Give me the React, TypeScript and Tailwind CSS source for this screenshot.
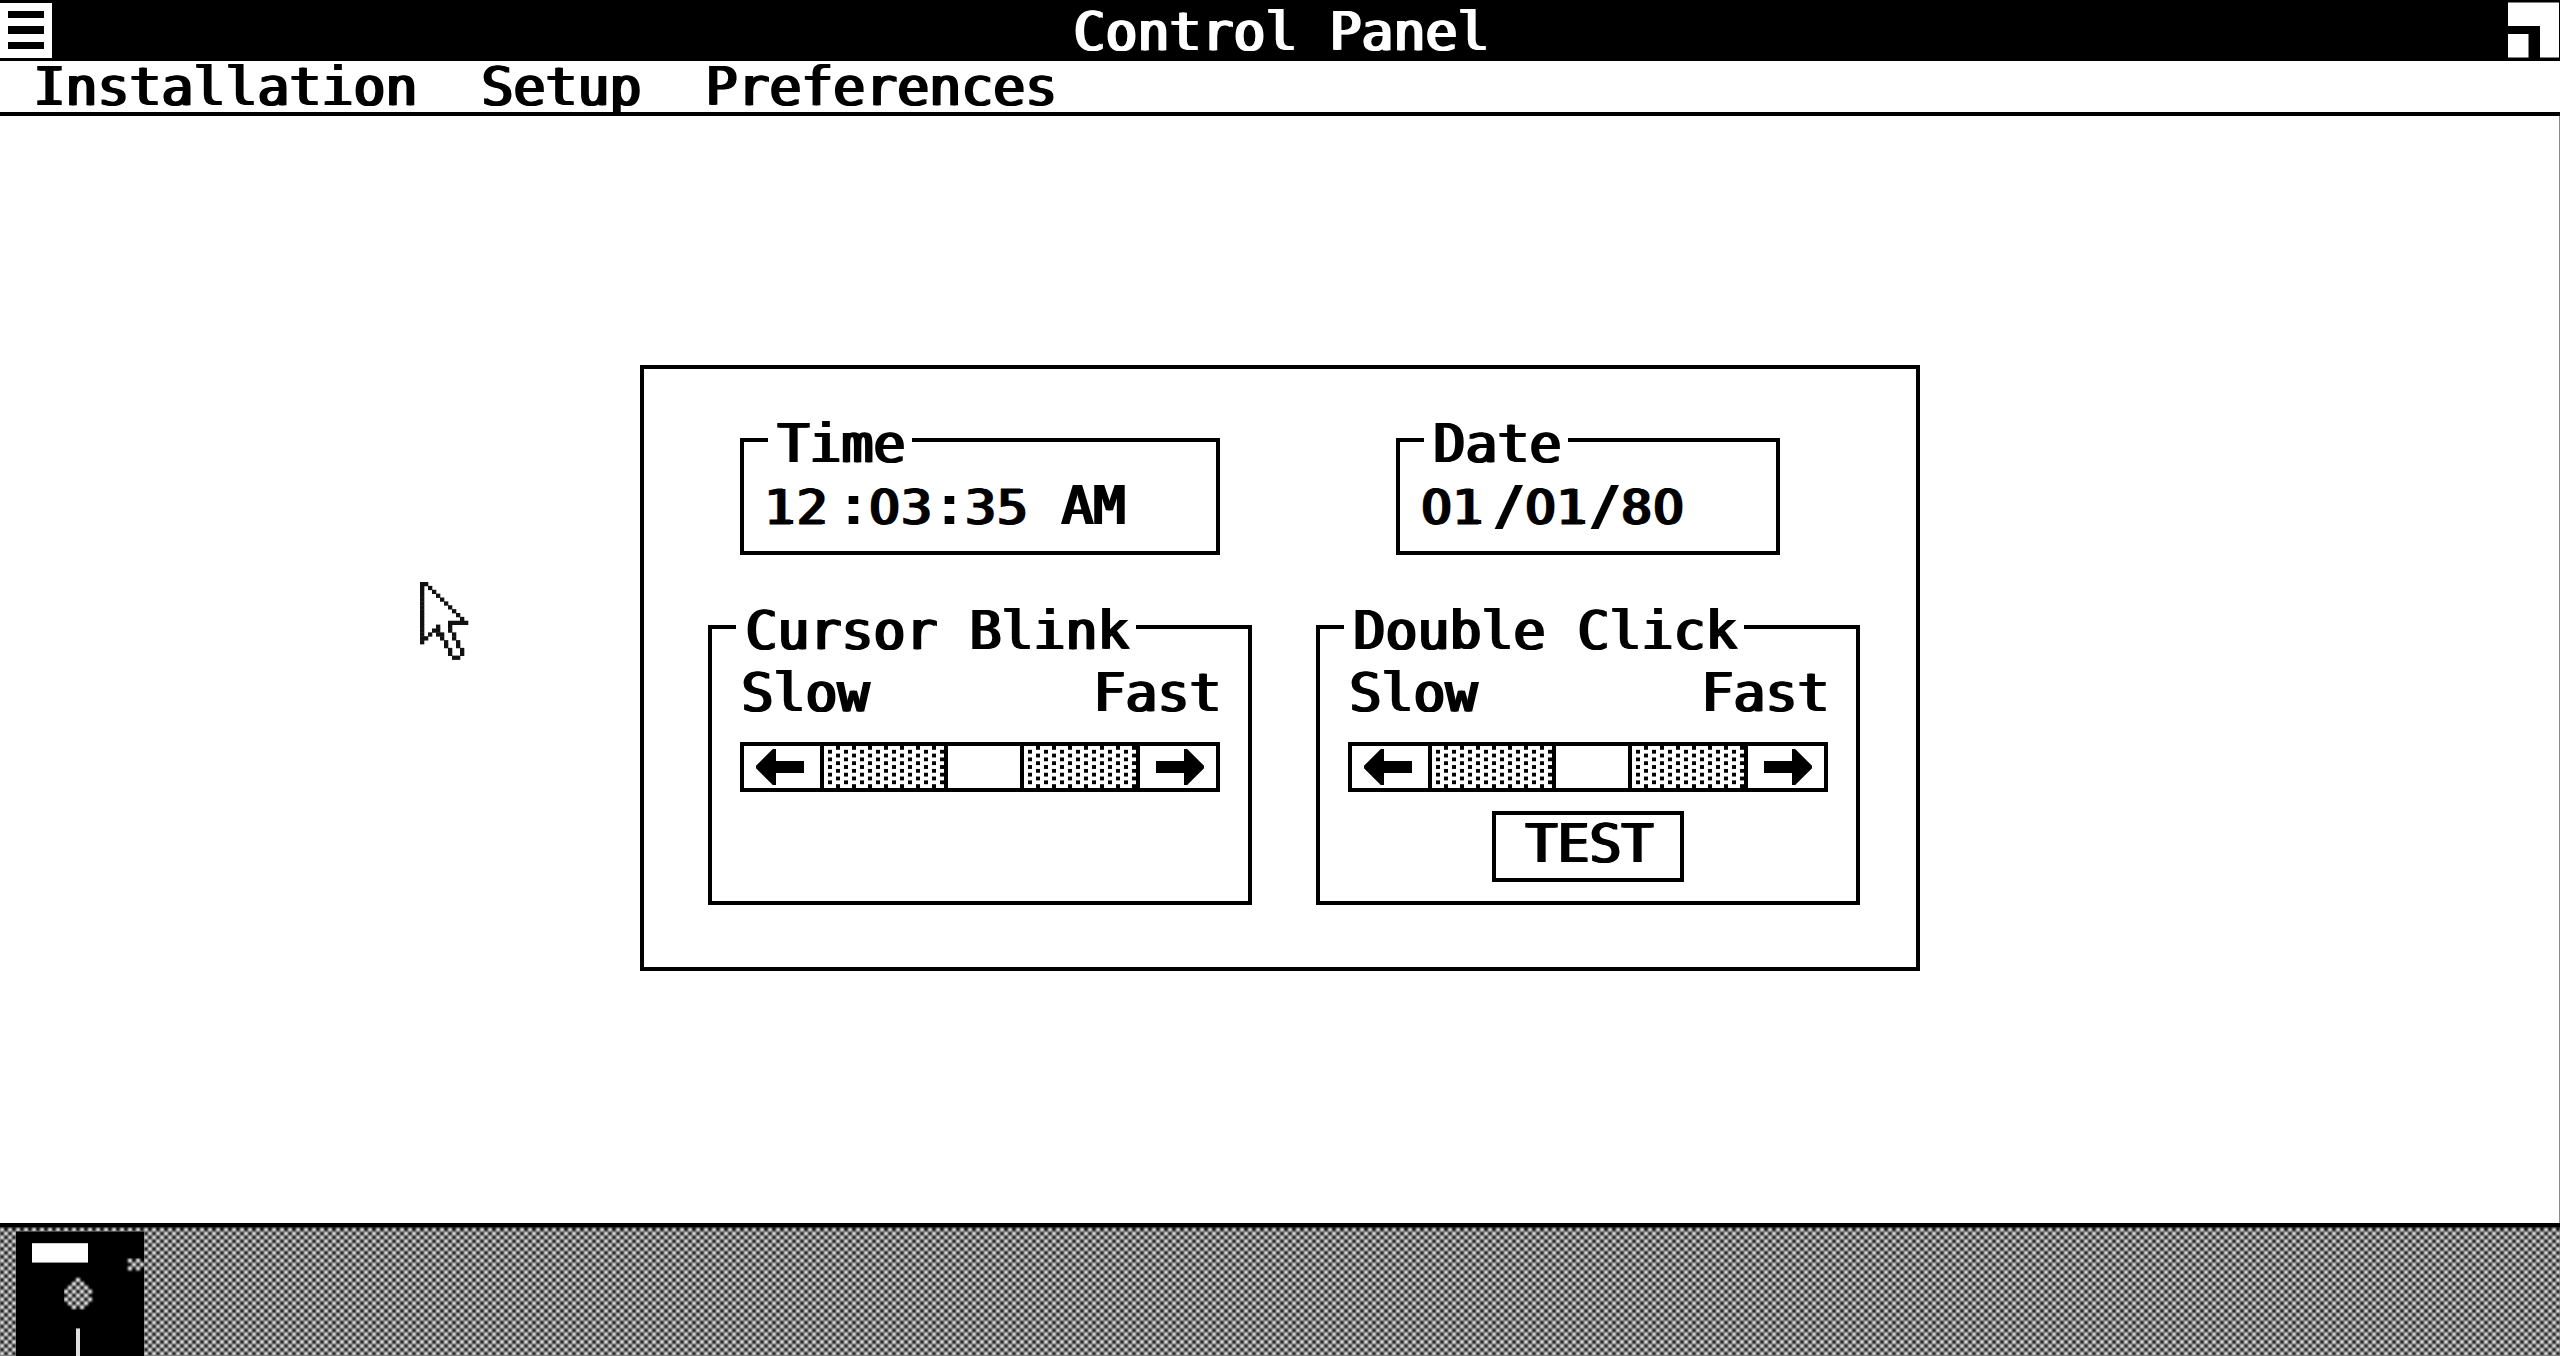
import type { ReactNode } from "react";

/* Double-struck monospace: thick stems, thin horizontals. */
const glyphs =
  "block whitespace-pre font-['DejaVu_Sans_Mono',monospace] text-[53.15px] leading-[44px] -mb-[4px] [text-shadow:1.5px_0_0_currentColor,3px_0_0_currentColor]";

function Label({ children, className = "" }: { children: ReactNode; className?: string }) {
  return <span className={`${glyphs} ${className}`}>{children}</span>;
}

function Digits({ children, className = "" }: { children: string; className?: string }) {
  return (
    <span
      className={`font-['DejaVu_Sans',sans-serif] text-[48px] leading-[0px] tracking-[1.46px] [-webkit-text-stroke:0.8px_currentColor] ${className}`}
    >
      {children}
    </span>
  );
}

const ROW = 3.874;

function SystemMenuIcon() {
  return (
    <div className="mt-[2.5px] flex h-[55px] w-[52px] flex-col gap-[8px] bg-white pt-[8px] pl-[8px]">
      <div className="h-[7.5px] w-[36px] bg-black" />
      <div className="h-[7.5px] w-[36px] bg-black" />
      <div className="h-[7.5px] w-[36px] bg-black" />
    </div>
  );
}

function SizeIcon() {
  return (
    <svg width="52" height="61" viewBox="0 0 52 61">
      <path d="M0 2.5H51V57.5H32V26H0Z" fill="#fff" />
      <rect x="0" y="34" width="20.5" height="23.5" fill="#fff" />
    </svg>
  );
}

function Arrow({ flip = false }: { flip?: boolean }) {
  return (
    <svg width="48" height="36" viewBox="0 0 12 9" preserveAspectRatio="none" className={flip ? "-scale-x-100" : ""}>
      <path d="M0 4.2L4.2 0H5V3H12V6H5V9H4.2L0 4.8Z" />
    </svg>
  );
}

function Track({ id, width }: { id: string; width: number }) {
  return (
    <svg width={width} height="42" className="shrink-0">
      <defs>
        <pattern id={id} width="16" height="7.64" patternUnits="userSpaceOnUse">
          <rect x="12" y="0" width="4" height="3.82" />
          <rect x="4" y="3.82" width="4" height="3.82" />
        </pattern>
      </defs>
      <rect width={width} height="42" fill={`url(#${id})`} />
    </svg>
  );
}

function ScrollBar({ id }: { id: string }) {
  return (
    <div className="flex h-[50px] w-[480px] border-4 border-black">
      <div className="flex w-[80px] items-center border-r-4 border-black pl-[12px]">
        <Arrow />
      </div>
      <Track id={`${id}-left`} width={120} />
      <div className="w-[80px] border-x-4 border-black" />
      <Track id={`${id}-right`} width={112} />
      <div className="flex w-[80px] items-center border-l-4 border-black pl-[16px]">
        <Arrow flip />
      </div>
    </div>
  );
}

function Group({ title, className, children }: { title: string; className: string; children: ReactNode }) {
  return (
    <section className={`border-4 border-black ${className}`}>
      <div className="-mt-[20px] ml-[24px] h-[40px] w-max bg-white px-[8px]">
        <Label>{title}</Label>
      </div>
      {children}
    </section>
  );
}

function SpeedRange() {
  return (
    <div className="mt-[22px] flex h-[40px] justify-between px-[28px]">
      <Label>Slow</Label>
      <Label>Fast</Label>
    </div>
  );
}

function Desktop() {
  const dots: [number, number[]][] = [
    [13, [76]],
    [14, [72, 80]],
    [15, [68, 76, 84]],
    [16, [64, 72, 80, 88]],
    [17, [68, 76, 84]],
    [18, [64, 72, 80, 88]],
    [19, [68, 76, 84]],
    [20, [72, 80]],
    [8, [128, 136]],
    [9, [132, 140]],
    [10, [128, 136]],
  ];
  return (
    <svg width="2560" height="129" className="block bg-black">
      <defs>
        <pattern id="checker" width="8" height={ROW * 2} patternUnits="userSpaceOnUse">
          <rect x="0" y="0" width="4" height={ROW} fill="#fff" />
          <rect x="4" y={ROW} width="4" height={ROW} fill="#fff" />
        </pattern>
        <filter id="soften" x="0" y="0" width="1" height="1" colorInterpolationFilters="sRGB">
          <feGaussianBlur stdDeviation="1" />
        </filter>
      </defs>
      <g transform="translate(0 .7)">
        <rect x="-8" width="2576" height="140" fill="url(#checker)" filter="url(#soften)" />
        <rect x="16" y={ROW} width="128" height="129" />
        <rect x="32" y={ROW * 4} width="56" height={ROW * 5} fill="#fff" />
        <g filter="url(#soften)">
          {dots.map(([row, cells]) =>
            cells.map((x) => <rect key={`${row}-${x}`} x={x} y={row * ROW} width="4" height={ROW} fill="#fff" />),
          )}
        </g>
        <rect x="76" y={ROW * 26} width="4" height="40" fill="#e0e0e0" />
      </g>
    </svg>
  );
}

function Pointer() {
  const rows: number[][] = [
    [0, 1], [0, 2], [0, 3], [0, 4], [0, 5], [0, 6], [0, 7], [0, 8], [0, 9], [0, 10],
    [0, 7, 8, 9, 10, 11], [0, 4, 7], [0, 3, 4, 7], [0, 2, 4, 5, 8], [0, 1, 5, 8],
    [0, 6, 9], [6, 9], [7, 10], [7, 10], [8, 9],
  ];
  return (
    <svg className="absolute top-[582px] left-[420px]" width="50" height="80">
      {rows.map((cols, r) =>
        cols.map((c) => (
          <rect key={`${r}-${c}`} x={c * 4} y={r * ROW} width="4.3" height={ROW + 0.4} fill="#111" />
        )),
      )}
    </svg>
  );
}

export default function App() {
  return (
    <div className="relative flex h-[1356px] w-[2560px] flex-col overflow-hidden bg-white text-black">
      <header className="flex h-[61px] justify-between bg-black text-white">
        <SystemMenuIcon />
        <Label className="pt-[10px]">Control Panel</Label>
        <SizeIcon />
      </header>
      <nav className="flex h-[55px] gap-[64px] border-b-4 border-black pt-[4px] pl-[32px]">
        <Label>Installation</Label>
        <Label>Setup</Label>
        <Label>Preferences</Label>
      </nav>
      <main className="h-[1107px] border-r border-[#8a8a8a] pt-[249px] pl-[640px]">
        <div className="h-[606px] w-[1280px] border-4 border-black pt-[69px]">
          <div className="flex gap-[176px] pl-[96px]">
            <Group title="Time" className="h-[117px] w-[480px]">
              <Label className="mt-[22px] ml-[20px]">
                <Digits className="mr-[8px]">12</Digits>:<Digits>03</Digits>:<Digits>35</Digits> AM
              </Label>
            </Group>
            <Group title="Date" className="h-[117px] w-[384px]">
              <Label className="mt-[22px] ml-[20px]">
                <Digits className="mr-[8px]">01</Digits>/<Digits>01</Digits>/<Digits>80</Digits>
              </Label>
            </Group>
          </div>
          <div className="mt-[70px] flex gap-[64px] pl-[64px]">
            <Group title="Cursor Blink" className="h-[280px] w-[544px]">
              <SpeedRange />
              <div className="mt-[31px] ml-[28px]">
                <ScrollBar id="blink" />
              </div>
            </Group>
            <Group title="Double Click" className="h-[280px] w-[544px]">
              <SpeedRange />
              <div className="mt-[31px] ml-[28px]">
                <ScrollBar id="click" />
              </div>
              <button className="mx-auto mt-[19px] flex h-[71px] w-[192px] justify-center border-4 border-black pt-[7px]">
                <Label>TEST</Label>
              </button>
            </Group>
          </div>
        </div>
      </main>
      <div className="h-[4px] bg-black" />
      <Desktop />
      <Pointer />
    </div>
  );
}
